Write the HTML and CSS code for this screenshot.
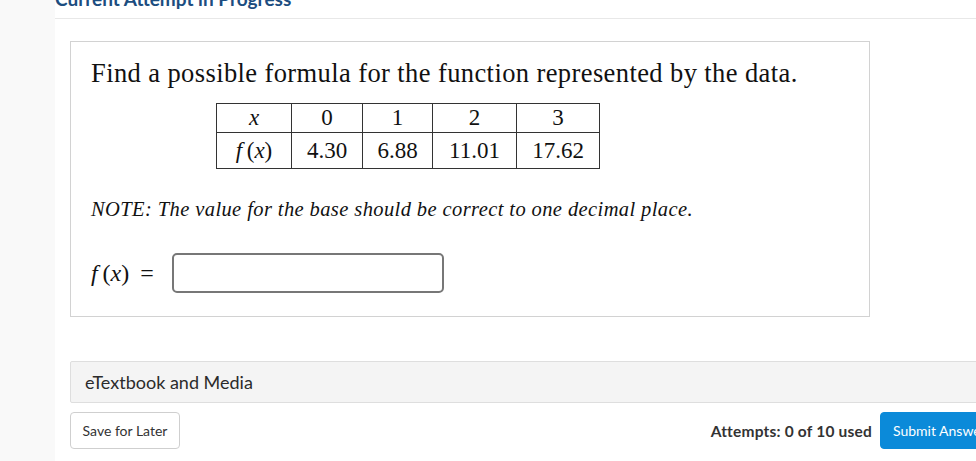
FILE: index.html
```html
<!DOCTYPE html>
<html>
<head>
<meta charset="utf-8">
<link rel="stylesheet" href="styles.css">
</head>
<body>
<div class="page">
  <aside class="sidebar"></aside>
  <main class="main">
    <header class="head"><span class="head-title">Current Attempt in Progress</span></header>
    <div class="content">
      <section class="question">
        <p class="prompt">Find a possible formula for the function represented by the data.</p>
        <table class="data">
          <tr>
            <td class="c1"><i>x</i></td><td class="c2">0</td><td class="c3">1</td><td class="c4">2</td><td class="c5">3</td>
          </tr>
          <tr class="r2">
            <td class="c1"><i>f</i>&#8201;(<i>x</i>)</td><td class="c2">4.30</td><td class="c3">6.88</td><td class="c4">11.01</td><td class="c5">17.62</td>
          </tr>
        </table>
        <p class="note">NOTE: The value for the base should be correct to one decimal place.</p>
        <div class="answer">
          <span class="fx"><i>f</i>&#8201;(<i>x</i>)<span class="eq">=</span></span>
          <span class="input"></span>
        </div>
      </section>
      <div class="media">eTextbook and Media</div>
      <div class="actions">
        <button class="btn save">Save for Later</button>
        <div class="right">
          <span class="attempts">Attempts: 0 of 10 used</span>
          <button class="btn submit">Submit Answer</button>
        </div>
      </div>
    </div>
  </main>
</div>
</body>
</html>
```
FILE: styles.css
```css
html, body {
  margin: 0;
  padding: 0;
  background: #fff;
  overflow: hidden;
}
.page {
  display: flex;
  width: 1100px;
  height: 461px;
}
.sidebar {
  width: 55px;
  flex: none;
  background: #f9f9f9;
}
.main {
  flex: 1;
  background: #fff;
}
.head {
  height: 18px;
  border-bottom: 1px solid #e8e8e8;
  overflow: hidden;
}
.head-title {
  display: block;
  margin-top: -13px;
  font-family: Lato, sans-serif;
  font-weight: bold;
  font-size: 19px;
  line-height: 24px;
  color: #1c4d80;
}
.content {
  padding: 22px 0 0 15px;
  width: 930px;
}
.question {
  height: 274px;
  border: 1px solid #d2d2d2;
  padding: 0 20px;
  box-sizing: content-box;
  width: 758px;
}
.prompt {
  margin: 16px 0 0 0;
  font-family: "Liberation Serif", serif;
  font-size: 26.5px;
  line-height: 30px;
  letter-spacing: 0.4px;
  color: #111;
}
.data {
  margin: 15px 0 0 125px;
  border-collapse: collapse;
  font-family: "Liberation Serif", serif;
  font-size: 23px;
  color: #111;
}
.data td {
  border: 1px solid #333;
  text-align: center;
  padding: 0;
  height: 28px;
  line-height: 26px;
}
.data .r2 td {
  height: 35px;
}
.data .c1 { width: 74px; }
.data .c2 { width: 70px; }
.data .c3 { width: 69px; }
.data .c4 { width: 83px; }
.data .c5 { width: 82px; }
.note {
  margin: 28px 0 0 0;
  font-family: "Liberation Serif", serif;
  font-style: italic;
  font-size: 20.5px;
  line-height: 24px;
  letter-spacing: 0.4px;
  color: #111;
}
.answer {
  margin-top: 32px;
  display: flex;
  align-items: center;
  gap: 10px;
}
.fx {
  font-family: "Liberation Serif", serif;
  font-size: 24px;
  color: #111;
  width: 71px;
  white-space: nowrap;
}
.eq {
  margin-left: 11px;
}
.input {
  display: block;
  width: 268px;
  height: 36px;
  border: 2px solid #777;
  border-radius: 5px;
}
.media {
  margin-top: 44px;
  height: 40px;
  line-height: 40px;
  background: #f4f4f4;
  border: 1px solid #dedede;
  border-radius: 2px;
  padding-left: 14px;
  font-family: Lato, sans-serif;
  font-size: 18px;
  color: #2b2b2b;
}
.actions {
  margin-top: 9px;
  display: flex;
  justify-content: space-between;
  align-items: center;
}
.right {
  display: flex;
  align-items: center;
  gap: 8px;
}
.btn {
  font-family: Lato, sans-serif;
  font-size: 14px;
  height: 37px;
  border-radius: 4px;
  padding: 0 12px;
  white-space: nowrap;
  cursor: pointer;
}
.save {
  width: 110px;
  padding: 0;
  background: #fff;
  border: 1px solid #cfcfcf;
  color: #333;
}
.submit {
  background: #0b8ad9;
  border: 1px solid #0b8ad9;
  color: #fff;
  width: 120px;
  text-align: left;
}
.attempts {
  font-family: Lato, sans-serif;
  font-weight: bold;
  font-size: 15.5px;
  letter-spacing: 0.2px;
  color: #333;
}
```
